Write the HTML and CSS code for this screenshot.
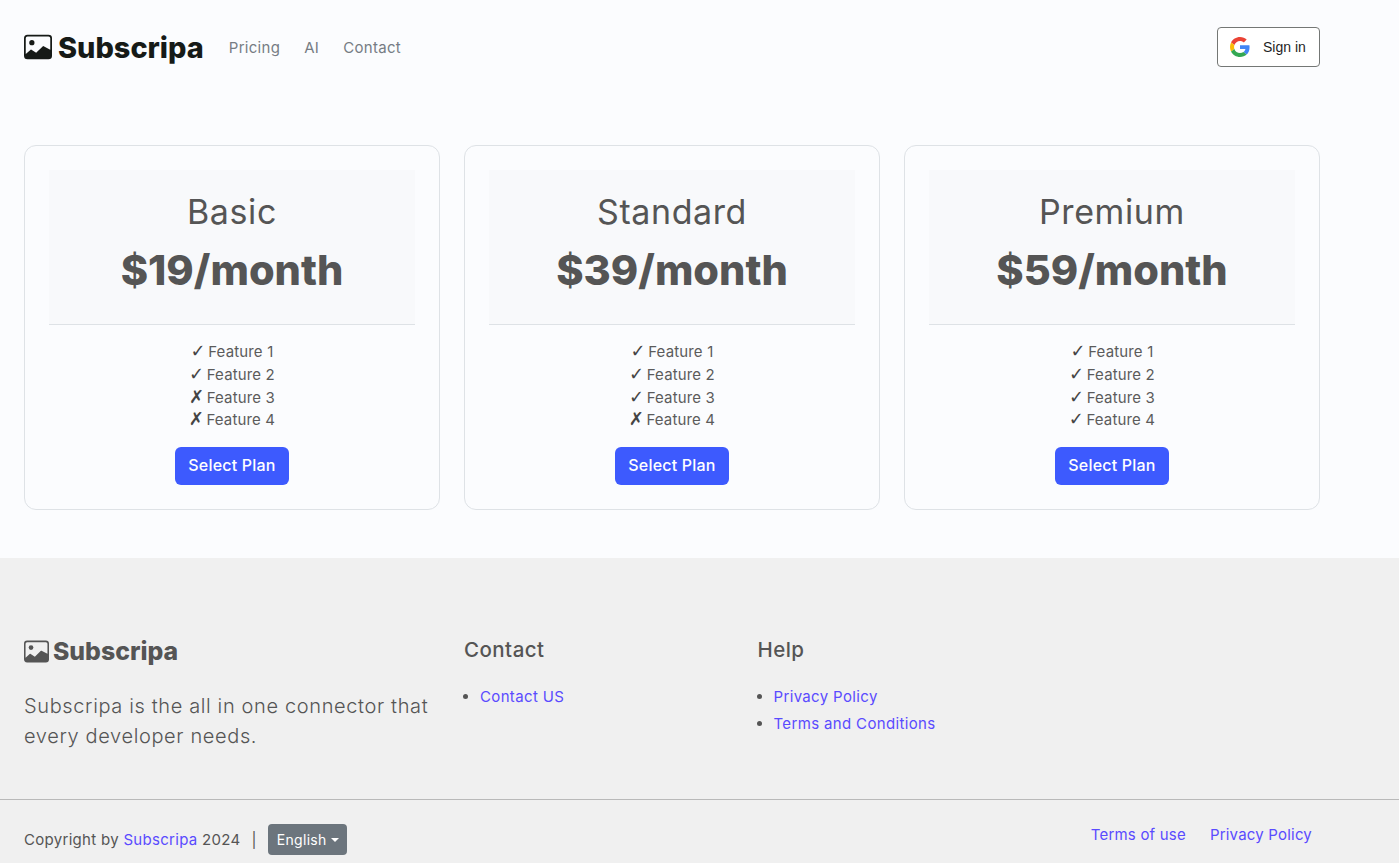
FILE: index.html
```html
<!DOCTYPE html>
<html lang="en">
<head>
<meta charset="utf-8">
<title>Subscripa</title>
<link rel="stylesheet" href="styles.css">
</head>
<body>
<header class="nav">
  <a class="brand" href="#">
    <svg class="brand-icon" viewBox="0 0 16 16" fill="currentColor"><path d="M6.002 5.5a1.5 1.5 0 1 1-3 0 1.5 1.5 0 0 1 3 0z"/><path d="M2.002 1a2 2 0 0 0-2 2v10a2 2 0 0 0 2 2h12a2 2 0 0 0 2-2V3a2 2 0 0 0-2-2h-12zm12 1a1 1 0 0 1 1 1v6.5l-3.777-1.947a.5.5 0 0 0-.577.093l-3.71 3.71-2.66-1.772a.5.5 0 0 0-.63.062L1.002 12V3a1 1 0 0 1 1-1h12z"/></svg>
    <span>Subscripa</span>
  </a>
  <nav class="nav-links">
    <a href="#">Pricing</a>
    <a href="#">AI</a>
    <a href="#">Contact</a>
  </nav>
  <button class="signin" type="button">
    <svg class="g-icon" viewBox="0 0 48 48"><path fill="#EA4335" d="M24 9.5c3.54 0 6.71 1.22 9.21 3.6l6.85-6.85C35.9 2.38 30.47 0 24 0 14.62 0 6.51 5.38 2.56 13.22l7.98 6.19C12.43 13.72 17.74 9.5 24 9.5z"/><path fill="#4285F4" d="M46.98 24.55c0-1.57-.15-3.09-.38-4.55H24v9.02h12.94c-.58 2.96-2.26 5.48-4.78 7.18l7.73 6c4.51-4.18 7.09-10.36 7.09-17.65z"/><path fill="#FBBC05" d="M10.53 28.59c-.48-1.45-.76-2.99-.76-4.59s.27-3.14.76-4.59l-7.98-6.19C.92 16.46 0 20.12 0 24c0 3.88.92 7.54 2.56 10.78l7.97-6.19z"/><path fill="#34A853" d="M24 48c6.48 0 11.93-2.13 15.89-5.81l-7.73-6c-2.15 1.45-4.92 2.3-8.16 2.3-6.26 0-11.57-4.22-13.47-9.91l-7.98 6.19C6.51 42.62 14.62 48 24 48z"/></svg>
    <span>Sign in</span>
  </button>
</header>

<main class="plans">
  <section class="card">
    <div class="card-head"><h2>Basic</h2><p class="price">$19/month</p></div>
    <ul class="features">
      <li><span class="mark">✓</span> Feature 1</li><li><span class="mark">✓</span> Feature 2</li><li><span class="mark">✗</span> Feature 3</li><li><span class="mark">✗</span> Feature 4</li>
    </ul>
    <button class="select" type="button">Select Plan</button>
  </section>
  <section class="card">
    <div class="card-head"><h2>Standard</h2><p class="price">$39/month</p></div>
    <ul class="features">
      <li><span class="mark">✓</span> Feature 1</li><li><span class="mark">✓</span> Feature 2</li><li><span class="mark">✓</span> Feature 3</li><li><span class="mark">✗</span> Feature 4</li>
    </ul>
    <button class="select" type="button">Select Plan</button>
  </section>
  <section class="card">
    <div class="card-head"><h2>Premium</h2><p class="price">$59/month</p></div>
    <ul class="features">
      <li><span class="mark">✓</span> Feature 1</li><li><span class="mark">✓</span> Feature 2</li><li><span class="mark">✓</span> Feature 3</li><li><span class="mark">✓</span> Feature 4</li>
    </ul>
    <button class="select" type="button">Select Plan</button>
  </section>
</main>

<footer class="footer">
  <div class="footer-top">
    <div class="about">
      <a class="foot-brand" href="#">
        <svg class="foot-icon" viewBox="0 0 16 16" fill="currentColor"><path d="M6.002 5.5a1.5 1.5 0 1 1-3 0 1.5 1.5 0 0 1 3 0z"/><path d="M2.002 1a2 2 0 0 0-2 2v10a2 2 0 0 0 2 2h12a2 2 0 0 0 2-2V3a2 2 0 0 0-2-2h-12zm12 1a1 1 0 0 1 1 1v6.5l-3.777-1.947a.5.5 0 0 0-.577.093l-3.71 3.71-2.66-1.772a.5.5 0 0 0-.63.062L1.002 12V3a1 1 0 0 1 1-1h12z"/></svg>
        <span>Subscripa</span>
      </a>
      <p class="tagline">Subscripa is the all in one connector that every developer needs.</p>
    </div>
    <div class="foot-col">
      <h3>Contact</h3>
      <ul><li><a href="#">Contact US</a></li></ul>
    </div>
    <div class="foot-col">
      <h3>Help</h3>
      <ul><li><a href="#">Privacy Policy</a></li><li><a href="#">Terms and Conditions</a></li></ul>
    </div>
  </div>
  <div class="footer-bottom">
    <div class="copy">
      <span>Copyright by <a href="#">Subscripa</a> 2024</span>
      <span class="sep">|</span>
      <button class="lang" type="button">English<i class="caret"></i></button>
    </div>
    <div class="legal"><a href="#">Terms of use</a><a href="#">Privacy Policy</a></div>
  </div>
</footer>
</body>
</html>
```
FILE: styles.css
```css
* { box-sizing: border-box; }
html, body { margin: 0; padding: 0; }
body {
  height: 863px;
  overflow: hidden;
  background: #fbfcfe;
  color: #555;
  font-family: Inter, "Open Sans", sans-serif;
  font-size: 15px;
}
a { text-decoration: none; color: #5a4bff; }

.nav { display: flex; align-items: center; height: 94px; width: 1320px; padding: 0 0 0 24px; }
.brand { display: flex; align-items: center; gap: 6px; color: #161a17; font-size: 28.9px; font-weight: 800; }
.brand-icon { width: 28px; height: 28px; }
.nav-links { display: flex; gap: 24px; margin-left: 25px; font-size: 15px; letter-spacing: .3px; }
.nav-links a { color: #767c84; }
.signin {
  display: flex; align-items: center; gap: 13px; margin-left: auto;
  width: 103px; height: 40px; padding: 0 12px;
  background: #fff; border: 1px solid #747775; border-radius: 4px;
  color: #1f1f1f; font: 14px "Liberation Sans", sans-serif;
}
.g-icon { width: 20px; height: 20px; flex: none; }

.plans { display: grid; grid-template-columns: repeat(3, 416px); gap: 24px; padding: 51px 0 0 24px; }
.card { height: 365px; padding: 24px; border: 1px solid #dee2e6; border-radius: 12px; text-align: center; }
.card-head { height: 155px; padding-top: 21px; background: #f8f9fb; border-bottom: 1px solid #dee2e6; }
.card-head h2 { margin: 0; font-size: 34px; line-height: 42px; font-weight: 400; letter-spacing: .6px; }
.price { margin: 12px 0 0; font-size: 41.5px; line-height: 50px; font-weight: 800; }
.features { list-style: none; margin: 16px 0 0; padding: 0; line-height: 22.75px; letter-spacing: .15px; color: #5b5b5b; }
.mark { margin-right: -2px; font-family: "DejaVu Sans", sans-serif; font-size: 18px; line-height: 0; color: #444; }
.select {
  margin-top: 15px; width: 114px; height: 38px; padding: 0 0 2px;
  background: #3d5afe; border: 0; border-radius: 6px;
  color: #fff; font: 500 16px Inter, sans-serif; letter-spacing: .2px;
}

.footer { margin-top: 48px; height: 305px; background: #f0f0f0; }
.footer-top { display: grid; grid-template-columns: 440px 293.5px 1fr; height: 242px; padding: 77px 0 0 24px; border-bottom: 1px solid #b9b9b9; }
.foot-brand { display: flex; align-items: center; gap: 4px; color: #555; font-size: 24.8px; font-weight: 800; height: 32px; }
.foot-icon { width: 25px; height: 25px; }
.tagline { width: 420px; margin: 24px 0 0; font-size: 20px; line-height: 30px; font-weight: 300; letter-spacing: .63px; }
.foot-col h3 { margin: 0; font-size: 20.5px; line-height: 30px; font-weight: 500; letter-spacing: .45px; }
.foot-col ul { margin: 18px 0 0; padding-left: 16px; font-size: 15px; line-height: 27px; letter-spacing: .35px; }

.footer-bottom { display: flex; justify-content: space-between; width: 1320px; padding: 24px 8px 0 24px; }
.copy { display: flex; align-items: center; height: 31px; font-size: 15px; letter-spacing: .3px; }
.sep { margin: 0 11px; color: #555; }
.lang {
  display: inline-flex; align-items: center; gap: 4px; width: 79px; height: 31px; padding: 0 9px;
  background: #6c757d; border: 0; border-radius: 4px; color: #fff; font: 14px Inter, sans-serif; letter-spacing: .3px;
}
.caret { border-top: 4px solid #fff; border-left: 4px solid transparent; border-right: 4px solid transparent; }
.legal { display: flex; gap: 24px; height: 22px; margin-top: 1px; font-size: 15px; letter-spacing: .2px; }
```
